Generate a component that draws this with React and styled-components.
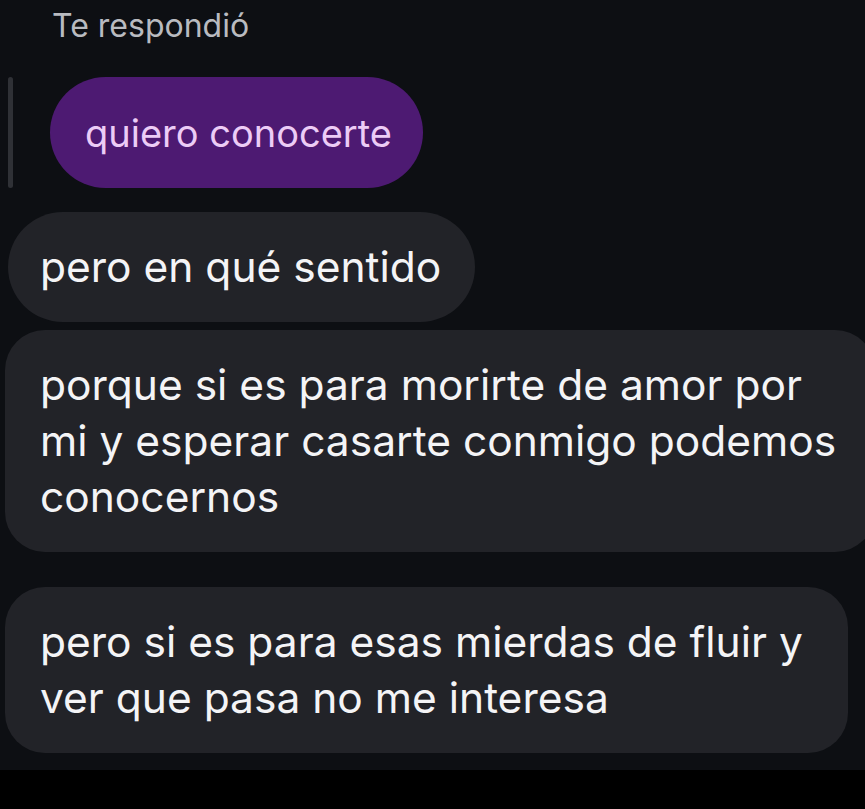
import React from "react";
import styled, { createGlobalStyle } from "styled-components";

const GlobalStyle = createGlobalStyle`
  html, body {
    margin: 0;
    padding: 0;
    background: #0d0f13;
  }
  body {
    font-family: Inter, "Liberation Sans", sans-serif;
    overflow: hidden;
  }
`;

const Screen = styled.div`
  width: 865px;
  height: 809px;
  display: flex;
  flex-direction: column;
  background: #0d0f13;
  overflow: hidden;
`;

const ReplyLabel = styled.div`
  padding: 6px 0 0 52px;
  height: 43px;
  line-height: 40px;
  color: #b9bbc0;
  font-size: 32px;
`;

const QuoteRow = styled.div`
  display: flex;
  align-items: stretch;
  margin-top: 28px;
  padding-left: 8px;
  gap: 37px;
`;

const QuoteBar = styled.div`
  width: 5px;
  border-radius: 3px;
  background: #2f3136;
`;

const QuoteBubble = styled.div`
  height: 111px;
  display: flex;
  align-items: center;
  padding: 0 31px 0 35px;
  border-radius: 56px;
  background: #4d1a72;
  color: #ecccf6;
  font-size: 38px;
`;

const Bubble = styled.div`
  align-self: flex-start;
  box-sizing: border-box;
  margin-top: ${(p) => p.$top}px;
  margin-left: ${(p) => p.$left}px;
  width: ${(p) => (p.$width ? `${p.$width}px` : "auto")};
  min-height: ${(p) => p.$height}px;
  padding: ${(p) => p.$pad};
  border-radius: ${(p) => p.$radius}px;
  background: #222328;
  color: #f4f4f6;
  font-size: 42.5px;
  line-height: ${(p) => p.$line}px;
  display: flex;
  align-items: center;
`;

const BottomBar = styled.div`
  margin-top: auto;
  height: 39px;
  background: #000;
`;

export default function App() {
  return (
    <>
      <GlobalStyle />
      <Screen>
        <ReplyLabel>Te respondió</ReplyLabel>
        <QuoteRow>
          <QuoteBar />
          <QuoteBubble>quiero conocerte</QuoteBubble>
        </QuoteRow>
        <Bubble $top={24} $left={8} $height={110} $pad="0 34px 0 32px" $radius={55} $line={50}>
          pero en qué sentido
        </Bubble>
        <Bubble $top={8} $left={5} $width={870} $height={222} $pad="0 30px 0 35px" $radius={40} $line={56}>
          porque si es para morirte de amor por mi y esperar casarte conmigo podemos conocernos
        </Bubble>
        <Bubble $top={35} $left={5} $width={843} $height={166} $pad="0 30px 0 35px" $radius={40} $line={56}>
          pero si es para esas mierdas de fluir y ver que pasa no me interesa
        </Bubble>
        <BottomBar />
      </Screen>
    </>
  );
}
